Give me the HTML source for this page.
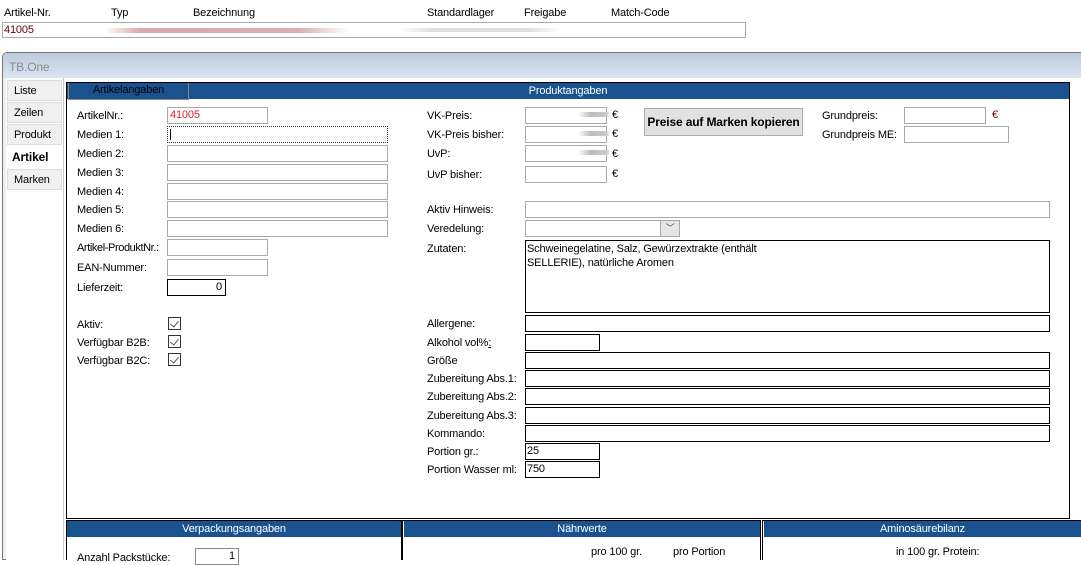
<!DOCTYPE html>
<html><head><meta charset="utf-8"><style>
*{box-sizing:border-box;margin:0;padding:0}
body{width:1081px;height:560px;overflow:hidden;background:#fff;font-family:"Liberation Sans",sans-serif;font-size:11px;color:#000;position:relative;letter-spacing:-0.15px}
.a{position:absolute;white-space:nowrap}
.in{position:absolute;height:17px;border:1px solid #a9a9a9;background:#fff}
.bk{position:absolute;height:17px;border:1px solid #000;background:#fff;padding-left:1px;line-height:15px}
.lb{position:absolute;white-space:nowrap;line-height:13px;margin-top:1px}
.tab{position:absolute;left:7px;width:55px;height:21px;background:#f0f0f0;border:1px solid #ddd;padding:4px 0 0 6px}
.hd{position:absolute;background:#1a528f;color:#fff;text-align:center;height:16px;line-height:16px}
.cb{position:absolute;width:13px;height:13px;border:1px solid #333;background:#fff}
.cb:after{content:"";position:absolute;left:3px;top:1px;width:4px;height:7px;border:solid #555;border-width:0 1px 1px 0;transform:rotate(40deg)}
.eu{position:absolute;margin-top:1px}
.blur{position:absolute;height:5px;background:linear-gradient(90deg,rgba(255,255,255,0),#bbb 40%,#ccc 90%,rgba(255,255,255,0))}
</style></head><body>
<div class="a" style="left:4px;top:7px">Artikel-Nr.</div>
<div class="a" style="left:111px;top:7px">Typ</div>
<div class="a" style="left:193px;top:7px">Bezeichnung</div>
<div class="a" style="left:427px;top:7px">Standardlager</div>
<div class="a" style="left:524px;top:7px">Freigabe</div>
<div class="a" style="left:611px;top:7px">Match-Code</div>
<div style="position:absolute;left:2px;top:22px;width:744px;height:16px;border:1px solid #a9a9a9"></div>
<div class="a" style="left:4px;top:24px;color:#600">41005</div>
<div style="position:absolute;left:104px;top:28px;width:245px;height:5px;background:linear-gradient(90deg,#fff,#d9a8a8 15%,#d8b0b0 80%,#fff)"></div>
<div style="position:absolute;left:400px;top:28px;width:160px;height:4px;background:linear-gradient(90deg,#fff,#ddd 20%,#ddd 80%,#fff)"></div>

<div style="position:absolute;left:2px;top:52px;width:1079px;height:508px;border:1px solid #777;border-right:none;border-radius:5px 0 0 0;background:#f0f0f0"></div>
<div style="position:absolute;left:3px;top:53px;width:1078px;height:25px;background:linear-gradient(#bccadb,#dae5f0);border-radius:4px 0 0 0"></div>
<div class="a" style="left:9px;top:60px;color:#8a8a8a;font-size:12px">TB.One</div>
<div style="position:absolute;left:6px;top:78px;width:58px;height:482px;background:#fff;border-right:1px solid #ccc"></div>
<div style="position:absolute;left:64px;top:78px;width:1017px;height:482px;background:#fff"></div>
<div class="tab" style="top:80px">Liste</div>
<div class="tab" style="top:102px">Zeilen</div>
<div class="tab" style="top:124px">Produkt</div>
<div class="tab" style="top:146px;background:#fff;border:none;font-weight:bold;font-size:12px;left:6px;padding-left:6px;height:23px">Artikel</div>
<div class="tab" style="top:169px">Marken</div>

<div style="position:absolute;left:66px;top:82px;width:1004px;height:437px;border:1px solid #000"></div>
<div class="hd" style="left:67px;top:83px;width:1002px">Produktangaben</div>
<div style="position:absolute;left:68px;top:83px;width:121px;height:17px;background:#1a528f;border:1px solid #888;border-top:none;color:#000;text-align:center;line-height:15px">Artikelangaben</div>

<div class="lb" style="left:77px;top:109px">ArtikelNr.:</div><div class="in" style="left:167px;top:107px;width:101px;color:#e02020;padding-left:2px;line-height:15px">41005</div>
<div class="lb" style="left:77px;top:128px">Medien 1:</div><div class="in" style="left:167px;top:126px;width:221px;border:1px dotted #333"><div style="position:absolute;left:2px;top:2px;width:1px;height:11px;background:#000"></div></div>
<div class="lb" style="left:77px;top:147px">Medien 2:</div><div class="in" style="left:167px;top:145px;width:221px"></div>
<div class="lb" style="left:77px;top:166px">Medien 3:</div><div class="in" style="left:167px;top:164px;width:221px"></div>
<div class="lb" style="left:77px;top:185px">Medien 4:</div><div class="in" style="left:167px;top:183px;width:221px"></div>
<div class="lb" style="left:77px;top:203px">Medien 5:</div><div class="in" style="left:167px;top:201px;width:221px"></div>
<div class="lb" style="left:77px;top:222px">Medien 6:</div><div class="in" style="left:167px;top:220px;width:221px"></div>
<div class="lb" style="left:77px;top:241px;letter-spacing:-0.4px">Artikel-ProduktNr.:</div><div class="in" style="left:167px;top:239px;width:101px"></div>
<div class="lb" style="left:77px;top:261px">EAN-Nummer:</div><div class="in" style="left:167px;top:259px;width:101px"></div>
<div class="lb" style="left:77px;top:281px">Lieferzeit:</div><div class="bk" style="left:167px;top:279px;width:59px;text-align:right;padding-right:3px">0</div>
<div class="lb" style="left:77px;top:318px">Aktiv:</div><div class="cb" style="left:168px;top:317px"></div>
<div class="lb" style="left:77px;top:336px">Verfügbar B2B:</div><div class="cb" style="left:168px;top:335px"></div>
<div class="lb" style="left:77px;top:354px">Verfügbar B2C:</div><div class="cb" style="left:168px;top:353px"></div>

<div class="lb" style="left:427px;top:109px">VK-Preis:</div><div class="in" style="left:525px;top:107px;width:82px"></div><div class="blur" style="left:578px;top:112px;width:32px"></div><div class="eu" style="left:612px;top:108px">€</div>
<div class="lb" style="left:427px;top:128px">VK-Preis bisher:</div><div class="in" style="left:525px;top:126px;width:82px"></div><div class="blur" style="left:578px;top:131px;width:32px"></div><div class="eu" style="left:612px;top:127px">€</div>
<div class="lb" style="left:427px;top:147px">UvP:</div><div class="in" style="left:525px;top:145px;width:82px"></div><div class="blur" style="left:578px;top:150px;width:32px"></div><div class="eu" style="left:612px;top:147px">€</div>
<div class="lb" style="left:427px;top:168px">UvP bisher:</div><div class="in" style="left:525px;top:166px;width:82px"></div><div class="eu" style="left:612px;top:167px">€</div>
<div style="position:absolute;left:644px;top:108px;width:159px;height:28px;background:#e1e1e1;border:1px solid #adadad;font-weight:bold;font-size:12px;text-align:center;line-height:26px">Preise auf Marken kopieren</div>
<div class="lb" style="left:822px;top:109px">Grundpreis:</div><div class="in" style="left:904px;top:107px;width:82px"></div><div class="eu" style="left:992px;top:108px;color:#600">€</div>
<div class="lb" style="left:822px;top:128px">Grundpreis ME:</div><div class="in" style="left:904px;top:126px;width:105px"></div>

<div class="lb" style="left:427px;top:203px">Aktiv Hinweis:</div><div class="in" style="left:525px;top:201px;width:525px"></div>
<div class="lb" style="left:427px;top:222px">Veredelung:</div><div class="in" style="left:525px;top:220px;width:155px"></div><div style="position:absolute;left:660px;top:221px;width:19px;height:15px;background:#e5e5e5;border-left:1px solid #aaa;text-align:center;font-size:9px;line-height:15px;color:#444">﹀</div>
<div class="lb" style="left:427px;top:242px">Zutaten:</div><div style="position:absolute;left:525px;top:240px;width:525px;height:73px;border:1px solid #000;padding:1px 1px;line-height:14px">Schweinegelatine, Salz, Gewürzextrakte (enthält<br>SELLERIE), natürliche Aromen</div>
<div class="lb" style="left:427px;top:317px">Allergene:</div><div class="bk" style="left:525px;top:315px;width:525px"></div>
<div class="lb" style="left:427px;top:336px">Alkohol vol%<u>:</u></div><div class="bk" style="left:525px;top:334px;width:75px"></div>
<div class="lb" style="left:427px;top:354px">Größe</div><div class="bk" style="left:525px;top:352px;width:525px"></div>
<div class="lb" style="left:427px;top:372px">Zubereitung Abs.1:</div><div class="bk" style="left:525px;top:370px;width:525px"></div>
<div class="lb" style="left:427px;top:390px">Zubereitung Abs.2:</div><div class="bk" style="left:525px;top:388px;width:525px"></div>
<div class="lb" style="left:427px;top:409px">Zubereitung Abs.3:</div><div class="bk" style="left:525px;top:407px;width:525px"></div>
<div class="lb" style="left:427px;top:427px">Kommando:</div><div class="bk" style="left:525px;top:425px;width:525px"></div>
<div class="lb" style="left:427px;top:445px">Portion gr.:</div><div class="bk" style="left:525px;top:443px;width:75px">25</div>
<div class="lb" style="left:427px;top:463px">Portion Wasser ml:</div><div class="bk" style="left:525px;top:461px;width:75px">750</div>

<div style="position:absolute;left:66px;top:520px;width:336px;height:40px;border:1px solid #000;border-bottom:none"></div>
<div class="hd" style="left:67px;top:521px;width:334px">Verpackungsangaben</div>
<div style="position:absolute;left:402px;top:520px;width:359px;height:40px;border:1px solid #000;border-bottom:none"></div>
<div class="hd" style="left:404px;top:521px;width:356px">Nährwerte</div>
<div style="position:absolute;left:762px;top:520px;width:319px;height:40px;border:1px solid #000;border-bottom:none;border-right:none"></div>
<div class="hd" style="left:764px;top:521px;width:317px">Aminosäurebilanz</div>
<div class="lb" style="left:77px;top:551px">Anzahl Packstücke:</div><div class="bk" style="left:195px;top:548px;width:44px;text-align:right;padding-right:3px;border-color:#888">1</div>
<div class="lb" style="left:591px;top:545px">pro 100 gr.</div>
<div class="lb" style="left:673px;top:545px">pro Portion</div>
<div class="lb" style="left:896px;top:545px">in 100 gr. Protein:</div>
</body></html>
